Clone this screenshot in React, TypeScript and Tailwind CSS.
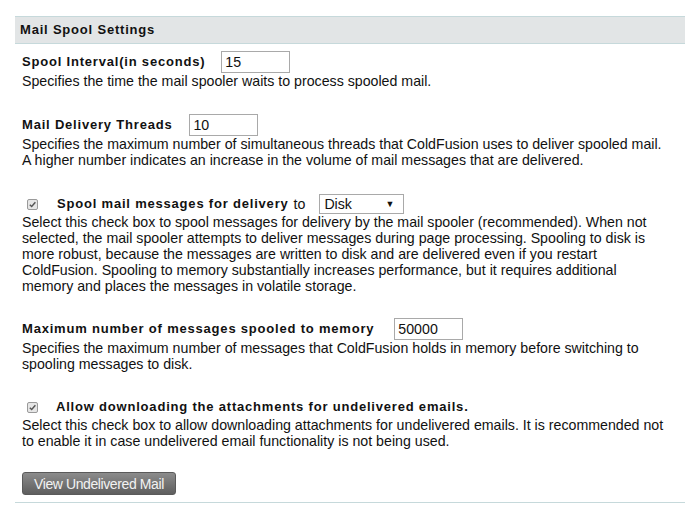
import React from "react";

function Check() {
  return (
    <span className="inline-flex h-[11px] w-[11px] shrink-0 items-center justify-center rounded-[2px] border border-[#9a9a9a] bg-[#e6e6e6]">
      <svg viewBox="0 0 10 10" className="h-[9px] w-[9px]">
        <path d="M2 5.2 L4.1 7.3 L8.2 2.6" fill="none" stroke="#555" strokeWidth="1.6" />
      </svg>
    </span>
  );
}

function Field({ value, width }: { value: string; width: string }) {
  return (
    <span className={`inline-flex h-[22px] items-center border border-[#a9a9a9] bg-white px-[3px] text-[14.2px] ${width}`}>
      {value}
    </span>
  );
}

export default function App() {
  return (
    <div className="min-h-[512px] bg-white pt-[16px] text-[14.2px] leading-[16px] text-[#111]" style={{ fontFamily: '"Liberation Sans", Arial, sans-serif' }}>
      <div className="ml-[15px] w-[670px]">
        <div className="flex h-[28px] items-center border-y border-[#c6d9db] bg-[#e2e5e6] pl-[5px] text-[13px] font-bold tracking-[0.8px]">
          Mail Spool Settings
        </div>

        <div className="pl-[7px] pr-[18px]">
          <div className="mt-[7px] flex h-[22px] items-center">
            <span className="text-[13px] font-bold tracking-[0.8px]">Spool Interval(in seconds)</span>
            <span className="ml-[16px]"><Field value="15" width="w-[69px]" /></span>
          </div>
          <p>Specifies the time the mail spooler waits to process spooled mail.</p>

          <div className="mt-[25px] flex h-[22px] items-center">
            <span className="text-[13px] font-bold tracking-[0.8px]">Mail Delivery Threads</span>
            <span className="ml-[17px]"><Field value="10" width="w-[69px]" /></span>
          </div>
          <p>
            Specifies the maximum number of simultaneous threads that ColdFusion uses to deliver spooled mail.
            A higher number indicates an increase in the volume of mail messages that are delivered.
          </p>

          <div className="mt-[26px] flex h-[20px] items-center">
            <span className="ml-[5px]"><Check /></span>
            <span className="ml-[19px] text-[13px] font-bold tracking-[0.8px]">Spool mail messages for delivery</span>
            <span className="ml-[5px]">to</span>
            <span className="ml-[14px] flex h-[20px] w-[85px] items-center justify-between border border-[#a9a9a9] bg-white pl-[4px] pr-[9px]">
              <span>Disk</span>
              <span className="text-[9px]">▼</span>
            </span>
          </div>
          <p>
            Select this check box to spool messages for delivery by the mail spooler (recommended). When not
            selected, the mail spooler attempts to deliver messages during page processing. Spooling to disk is
            more robust, because the messages are written to disk and are delivered even if you restart
            ColdFusion. Spooling to memory substantially increases performance, but it requires additional
            memory and places the messages in volatile storage.
          </p>

          <div className="mt-[24px] flex h-[22px] items-center">
            <span className="text-[13px] font-bold tracking-[0.8px]">Maximum number of messages spooled to memory</span>
            <span className="ml-[20px]"><Field value="50000" width="w-[69px]" /></span>
          </div>
          <p>
            Specifies the maximum number of messages that ColdFusion holds in memory before switching to
            spooling messages to disk.
          </p>

          <div className="mt-[25px] flex h-[20px] items-center">
            <span className="ml-[5px]"><Check /></span>
            <span className="ml-[18px] text-[13px] font-bold tracking-[0.8px]">Allow downloading the attachments for undelivered emails.</span>
          </div>
          <p>
            Select this check box to allow downloading attachments for undelivered emails. It is recommended not
            to enable it in case undelivered email functionality is not being used.
          </p>

          <button className="mt-[23px] flex h-[23px] items-center rounded-[3px] border border-[#5a5a5a] bg-gradient-to-b from-[#8c8c8c] to-[#5e5e5e] px-[11px] text-[14px] tracking-[-0.4px] text-[#f2f2f2]">
            View Undelivered Mail
          </button>
        </div>

        <div className="mt-[7px] border-t border-[#c6d9db]" />
      </div>
    </div>
  );
}
